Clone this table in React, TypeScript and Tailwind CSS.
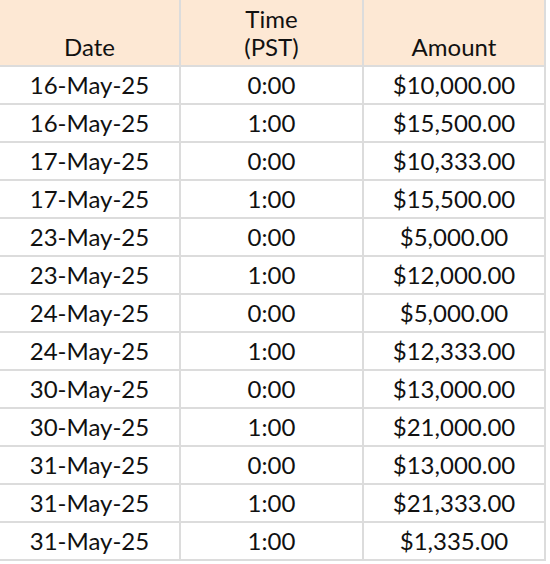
import React from "react";

const rows: [string, string, string][] = [
  ["16-May-25", "0:00", "$10,000.00"],
  ["16-May-25", "1:00", "$15,500.00"],
  ["17-May-25", "0:00", "$10,333.00"],
  ["17-May-25", "1:00", "$15,500.00"],
  ["23-May-25", "0:00", "$5,000.00"],
  ["23-May-25", "1:00", "$12,000.00"],
  ["24-May-25", "0:00", "$5,000.00"],
  ["24-May-25", "1:00", "$12,333.00"],
  ["30-May-25", "0:00", "$13,000.00"],
  ["30-May-25", "1:00", "$21,000.00"],
  ["31-May-25", "0:00", "$13,000.00"],
  ["31-May-25", "1:00", "$21,333.00"],
  ["31-May-25", "1:00", "$1,335.00"],
];

export default function App() {
  return (
    <div
      className="w-[550px] h-[564px] overflow-hidden bg-white text-[#111]"
      style={{ fontFamily: "Lato, 'Noto Sans', sans-serif" }}
    >
      <div className="grid grid-cols-[181px_183px_182px] w-[546px] text-[24px] leading-[26px]">
        <div className="h-[67px] bg-[#fde8d4] border-r-2 border-b-2 border-[#dcdcdc] flex items-end justify-center pb-[4px] text-center leading-[28px]">
          Date
        </div>
        <div className="h-[67px] bg-[#fde8d4] border-r-2 border-b-2 border-[#dcdcdc] flex items-end justify-center pb-[4px] text-center leading-[28px]">
          <span>
            Time
            <br />
            (PST)
          </span>
        </div>
        <div className="h-[67px] bg-[#fde8d4] border-r-2 border-b-2 border-[#dcdcdc] flex items-end justify-center pb-[4px] text-center leading-[28px]">
          Amount
        </div>
        {rows.map((r, i) => (
          <React.Fragment key={i}>
            <div className="h-[38px] border-r-2 border-b-2 border-[#dcdcdc] flex items-center justify-center">
              {r[0]}
            </div>
            <div className="h-[38px] border-r-2 border-b-2 border-[#dcdcdc] flex items-center justify-center">
              {r[1]}
            </div>
            <div className="h-[38px] border-r-2 border-b-2 border-[#dcdcdc] flex items-center justify-center">
              {r[2]}
            </div>
          </React.Fragment>
        ))}
      </div>
    </div>
  );
}
